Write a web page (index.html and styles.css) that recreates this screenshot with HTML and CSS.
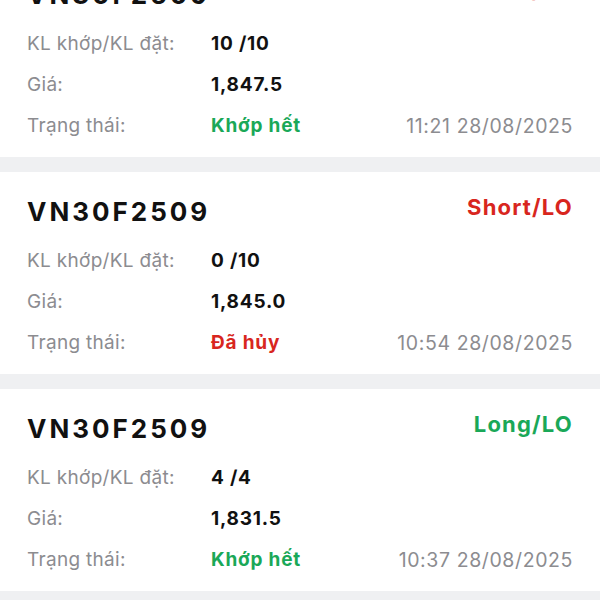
FILE: index.html
```html
<!DOCTYPE html>
<html lang="vi">
<head>
    <meta charset="UTF-8">
    <meta name="viewport" content="width=device-width, initial-scale=1.0">
    <title>Sổ lệnh</title>
    <link rel="stylesheet" href="styles.css">
</head>
<body>
    <div class="order-list">
        <div class="order">
            <div class="order-head">
                <span class="symbol">VN30F2509</span>
                <span class="side short">Short/LO</span>
            </div>
            <div class="row">
                <span class="label">KL khớp/KL đặt:</span>
                <span class="value">10 /10</span>
            </div>
            <div class="row">
                <span class="label">Giá:</span>
                <span class="value">1,847.5</span>
            </div>
            <div class="row">
                <span class="label">Trạng thái:</span>
                <span class="value matched">Khớp hết</span>
                <span class="time">11:21 28/08/2025</span>
            </div>
        </div>

        <div class="order">
            <div class="order-head">
                <span class="symbol">VN30F2509</span>
                <span class="side short">Short/LO</span>
            </div>
            <div class="row">
                <span class="label">KL khớp/KL đặt:</span>
                <span class="value">0 /10</span>
            </div>
            <div class="row">
                <span class="label">Giá:</span>
                <span class="value">1,845.0</span>
            </div>
            <div class="row">
                <span class="label">Trạng thái:</span>
                <span class="value cancelled">Đã hủy</span>
                <span class="time">10:54 28/08/2025</span>
            </div>
        </div>

        <div class="order">
            <div class="order-head">
                <span class="symbol">VN30F2509</span>
                <span class="side long">Long/LO</span>
            </div>
            <div class="row">
                <span class="label">KL khớp/KL đặt:</span>
                <span class="value">4 /4</span>
            </div>
            <div class="row">
                <span class="label">Giá:</span>
                <span class="value">1,831.5</span>
            </div>
            <div class="row">
                <span class="label">Trạng thái:</span>
                <span class="value matched">Khớp hết</span>
                <span class="time">10:37 28/08/2025</span>
            </div>
        </div>
    </div>
</body>
</html>
```

FILE: styles.css
```css
* {
    box-sizing: border-box;
    margin: 0;
    padding: 0;
}

body {
    background: #eff0f2;
    font-family: 'Inter', 'Noto Sans', sans-serif;
    color: #111;
    overflow: hidden;
}

/* list is scrolled: first card is partly off screen */
.order-list {
    display: flex;
    flex-direction: column;
    gap: 15px;
    margin-top: -45px;
}

.order {
    background: #fff;
    height: 202px;
    padding: 22px 27px 0 27px;
}

.order-head {
    display: flex;
    justify-content: space-between;
    align-items: center;
    height: 34px;
    margin-bottom: 12px;
}

.symbol {
    font-size: 26px;
    font-weight: 700;
    letter-spacing: 3px;
}

.side {
    font-size: 22px;
    line-height: 27px;
    font-weight: 700;
    letter-spacing: 1.2px;
    align-self: flex-start;
}

.short { color: #d8261e; }
.long { color: #1aa858; }

.row {
    display: flex;
    align-items: center;
    height: 41px;
    font-size: 19px;
}

.label {
    width: 184px;
    color: #8c8c90;
    letter-spacing: 0.3px;
}

.value {
    font-weight: 700;
    letter-spacing: 0.8px;
}

.matched { color: #1aa858; }
.cancelled { color: #d8261e; }

.time {
    margin-left: auto;
    font-size: 19.5px;
    color: #8c8c90;
    letter-spacing: 0.6px;
}
```
